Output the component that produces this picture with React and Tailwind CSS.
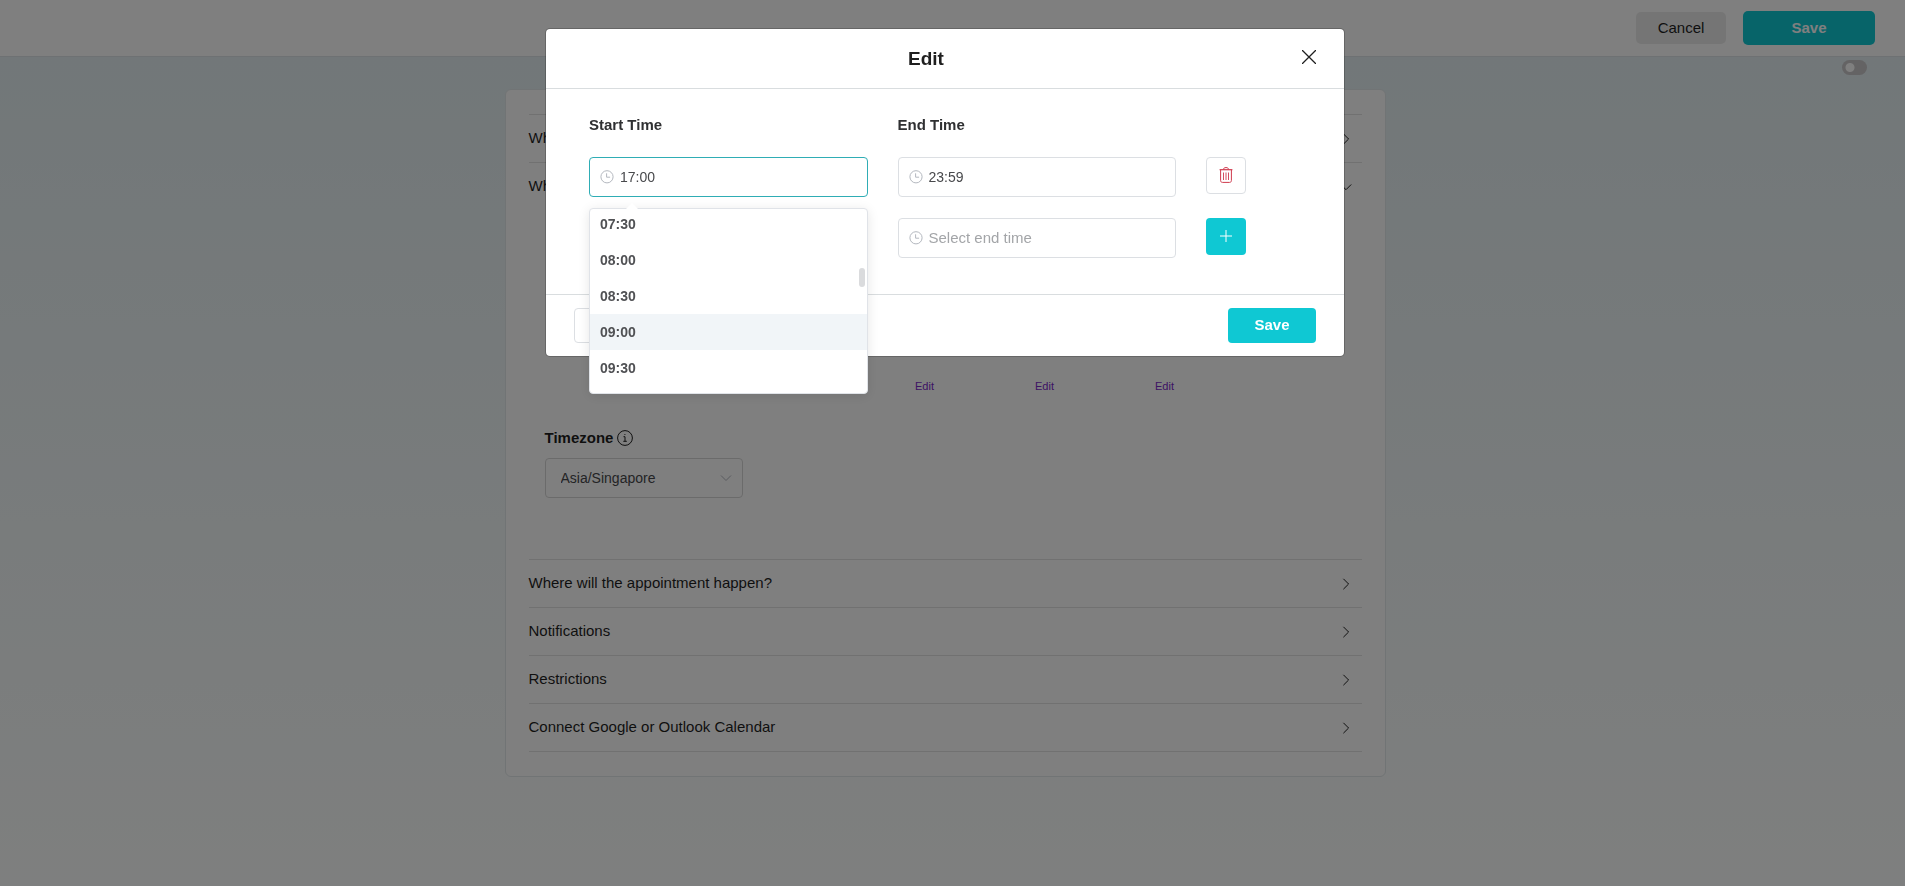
import { useState } from "react";

const TIMES = ["07:30", "08:00", "08:30", "09:00", "09:30"];

const CLOSED_SECTIONS = [
  "Where will the appointment happen?",
  "Notifications",
  "Restrictions",
  "Connect Google or Outlook Calendar",
];

function ClockIcon() {
  return (
    <svg viewBox="0 0 14 14" className="h-3.5 w-3.5 shrink-0" fill="none" stroke="#b4b8bf" strokeWidth="1" aria-hidden="true">
      <circle cx="7" cy="6.8" r="6.1" />
      <path d="M6.600 3.300v3.900h3.500" />
    </svg>
  );
}

function TrashIcon() {
  return (
    <svg viewBox="0 0 14 16" className="h-4 w-3.5" fill="none" stroke="#cf3a4d" strokeWidth="1" aria-hidden="true">
      <path d="M.6 2.700h12.800" strokeWidth="1.2" />
      <path d="M4.600 2.400C4.600 1 5.400.6 7 .6s2.400.4 2.400 1.800" />
      <path d="M1.600 2.900v10.600c0 1.200.7 1.900 1.900 1.900h7c1.200 0 1.900-.7 1.900-1.900V2.900" />
      <path d="M4.500 5.500v7.500M7 5.500v7.500M9.500 5.500v7.500" strokeWidth=".9" />
    </svg>
  );
}

function PlusIcon() {
  return (
    <svg viewBox="0 0 12 12" className="h-3 w-3" fill="none" stroke="#ffffff" strokeWidth="1" aria-hidden="true">
      <path d="M6 0v12M0 6h12" />
    </svg>
  );
}

function CloseIcon() {
  return (
    <svg viewBox="0 0 14 14" className="h-3.5 w-3.5" fill="none" stroke="#1f1f1f" strokeWidth="1.3" strokeLinecap="round" aria-hidden="true">
      <path d="M.3.3l13.400 13.400M13.700.3L.3 13.700" />
    </svg>
  );
}

function InfoIcon() {
  return (
    <svg viewBox="0 0 16 16" className="h-4 w-4" fill="none" stroke="#1f1f1f" strokeWidth="1" aria-hidden="true">
      <circle cx="8" cy="8" r="7.400" />
      <path d="M6.500 6.700H8v4.600M6.300 11.300h3.500" />
      <circle cx="7.900" cy="4.500" r=".6" fill="#1f1f1f" stroke="none" />
    </svg>
  );
}

function Chevron({ open }) {
  return (
    <svg viewBox="0 0 12 12" className="h-3 w-3" fill="none" stroke="#1f1f1f" strokeWidth="1" aria-hidden="true">
      <path d={open ? "M.8 3.500L6 8.700l5.200-5.200" : "M3.400.8L8.600 6l-5.200 5.200"} />
    </svg>
  );
}

function SectionHeader({ title, open }) {
  return (
    <button type="button" aria-expanded={Boolean(open)} className="flex h-[47px] w-full items-center justify-between pr-2.5 text-left text-[15px] text-[#1f1f1f]">
      <span>{title}</span>
      <Chevron open={open} />
    </button>
  );
}

function TimeField({ label, value, onChange, active, children }) {
  return (
    <div className="relative">
      <label className={`flex h-10 items-center gap-1.5 rounded-sm border bg-white pr-2 pl-2.5 ${active ? "border-[#2fadb5]" : "border-[#dcdfe3]"}`}>
        <ClockIcon />
        <input
          aria-label={label}
          placeholder={label}
          value={value}
          onChange={(e) => onChange(e.target.value)}
          className="min-w-0 flex-1 bg-transparent text-sm text-[#48494c] outline-none placeholder:text-[15px] placeholder:text-[#a3a5a8]"
        />
      </label>
      {children}
    </div>
  );
}

function TimeList() {
  return (
    <div className="absolute inset-x-0 top-full z-20 mt-[11px] rounded-sm border border-[#e0e3e8] bg-white shadow-[0_2px_12px_rgba(0,0,0,0.1)]">
      <svg viewBox="0 0 12 6" className="absolute -top-1.5 left-9 h-1.5 w-3" aria-hidden="true">
        <path d="M0 6l6-6 6 6z" fill="#ffffff" />
      </svg>
      <div className="h-[184px] overflow-hidden">
        <ul role="listbox" aria-label="Start time options" className="-mt-[3px]">
          {TIMES.map((time) => (
            <li
              key={time}
              role="option"
              aria-selected={time === "09:00"}
              className={`h-9 px-2.5 text-sm leading-9 font-bold text-[#505154] ${time === "09:00" ? "bg-[#f1f5f8]" : ""}`}
            >
              {time}
            </li>
          ))}
        </ul>
      </div>
      <div className="absolute top-[59px] right-0.5 h-[19px] w-1.5 rounded-full bg-[#dadbdd]" />
    </div>
  );
}

function EditDialog() {
  const [times, setTimes] = useState({ start: "17:00", end: "23:59", nextStart: "", nextEnd: "" });
  const set = (key) => (value) => setTimes((t) => ({ ...t, [key]: value }));

  return (
    <div className="fixed inset-0 z-10 bg-black/50 pt-7 pr-[15px]">
      <div role="dialog" aria-modal="true" aria-labelledby="dialog-title" className="mx-auto max-w-[800px] rounded-[5px] border border-black/20 bg-white bg-clip-padding">
        <header className="flex h-[60px] items-center gap-6 border-b border-[#d9dddf] px-7">
          <h2 id="dialog-title" className="flex-1 text-center text-[19px] leading-6 font-bold text-[#1f1f1f]">Edit</h2>
          <button type="button" aria-label="Close" className="pb-1">
            <CloseIcon />
          </button>
        </header>
        <div className="pt-6 pr-[98px] pb-9 pl-[43px]">
          <div className="grid grid-cols-[1fr_1fr_40px] gap-x-[30px] text-[15px] leading-6 font-bold text-[#2f3032]">
            <span>Start Time</span>
            <span>End Time</span>
          </div>
          <div className="mt-5 grid grid-cols-[1fr_1fr_40px] gap-x-[30px] gap-y-[21px]">
            <TimeField label="Select start time" value={times.start} onChange={set("start")} active>
              <TimeList />
            </TimeField>
            <TimeField label="Select end time" value={times.end} onChange={set("end")} />
            <button type="button" aria-label="Delete time range" className="flex h-[37px] items-center justify-center rounded-sm border border-[#dcdfe3] bg-white pb-0.5">
              <TrashIcon />
            </button>
            <TimeField label="Select start time" value={times.nextStart} onChange={set("nextStart")} />
            <TimeField label="Select end time" value={times.nextEnd} onChange={set("nextEnd")} />
            <button type="button" aria-label="Add time range" className="flex h-[37px] items-center justify-center rounded-sm bg-[#0fc8d3] pb-0.5">
              <PlusIcon />
            </button>
          </div>
        </div>
        <footer className="flex items-center justify-between border-t border-[#d9dddf] px-7 py-[13px]">
          <button type="button" className="h-[35px] w-[88px] rounded-sm border border-[#dcdfe3] text-[15px] text-[#1f1f1f]">Cancel</button>
          <button type="button" className="h-[35px] w-[88px] rounded-sm bg-[#0fc8d3] text-[15px] font-bold text-white">Save</button>
        </footer>
      </div>
    </div>
  );
}

export default function App() {
  return (
    <div className="flex min-h-screen flex-col bg-white font-['Liberation_Sans',Arial,sans-serif] text-[#1f1f1f]">
      <header className="flex h-[57px] items-center justify-end gap-[17px] border-b border-[#dde3e6] bg-white pr-[30px]">
        <button type="button" className="h-8 w-[90px] rounded-[5px] bg-[#ebebeb] text-[15px]">Cancel</button>
        <button type="button" className="h-[34px] w-[132px] rounded-[5px] bg-[#0fc8d3] text-[15px] font-bold text-white">Save</button>
      </header>
      <main className="flex-1 bg-linear-to-b from-[#e4eff2] to-[#fdfffe] pr-[15px]">
        <div className="flex h-8 justify-end pt-[3px] pr-[23px]">
          <input
            type="checkbox"
            aria-label="Enable"
            className="h-[15px] w-[25px] appearance-none rounded-full bg-[#c8c6c8] bg-[radial-gradient(circle_at_8px_50%,#ffffff_4px,transparent_5px)]"
          />
        </div>
        <div className="mx-auto max-w-[881px] rounded-md border border-[#e2e8ea] bg-white px-[23px] pt-6 pb-6">
          <section className="border-t border-[#e2e2e2]">
            <SectionHeader title="What" />
          </section>
          <section className="border-t border-[#e2e2e2]">
            <SectionHeader title="When" open />
            <div className="px-4 pt-[168px] pb-[61px]">
              <div className="flex justify-end pr-[121px] text-center text-[11px] leading-4">
                <a href="#wednesday" className="w-[120px] text-[#7a28c8]">Edit</a>
                <a href="#thursday" className="w-[120px] text-[#7a28c8]">Edit</a>
                <a href="#friday" className="w-[120px] text-[#7a28c8]">Edit</a>
              </div>
              <div className="mt-8 flex h-6 items-center gap-1 text-[15px] font-bold">
                <label htmlFor="timezone">Timezone</label>
                <InfoIcon />
              </div>
              <div className="mt-2 grid w-[198px] items-center">
                <select id="timezone" className="col-start-1 row-start-1 h-10 w-full appearance-none rounded-sm border border-[#d6d6d6] bg-white px-[15px] text-sm text-[#48494c]">
                  <option>Asia/Singapore</option>
                </select>
                <svg viewBox="0 0 12 12" className="pointer-events-none col-start-1 row-start-1 mr-[11px] h-3 w-3 justify-self-end" fill="none" stroke="#b4b8bf" strokeWidth="1" aria-hidden="true">
                  <path d="M1 3.500l5 5 5-5" />
                </svg>
              </div>
            </div>
          </section>
          <div className="border-b border-[#e2e2e2]">
            {CLOSED_SECTIONS.map((title) => (
              <section key={title} className="border-t border-[#e2e2e2]">
                <SectionHeader title={title} />
              </section>
            ))}
          </div>
        </div>
      </main>
      <EditDialog />
    </div>
  );
}
